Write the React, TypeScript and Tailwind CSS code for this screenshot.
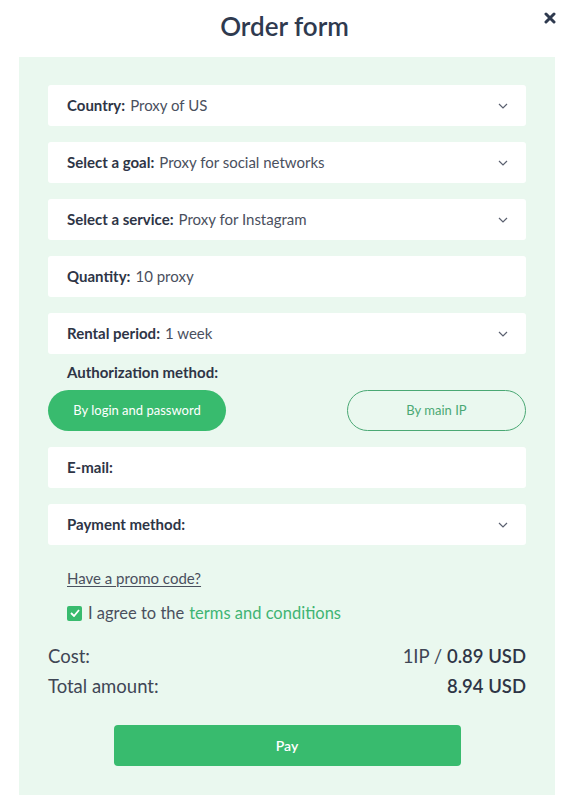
import * as React from "react"

const font = { fontFamily: "Lato, 'Open Sans', sans-serif" }

function Chevron() {
  return (
    <svg width="10" height="6" viewBox="0 0 10 6" className="ml-auto mr-[18px]">
      <path d="M1 1l4 4 4-4" fill="none" stroke="#5b6170" strokeWidth="1.2" />
    </svg>
  )
}

function Field({ label, value, select = true }: { label: string; value?: string; select?: boolean }) {
  return (
    <div className="flex h-[41px] items-center rounded-[3px] bg-white pl-[19px] text-[15px]">
      <span className="font-bold text-[#2e3546]">{label}</span>
      {value && <span className="ml-[5px] text-[#4a505e]">{value}</span>}
      {select && <Chevron />}
    </div>
  )
}

export default function App() {
  return (
    <div className="relative h-[800px] w-[569px] bg-white" style={font}>
      <div className="flex h-[57px] items-center justify-center">
        <h1 className="-mt-[4px] text-[26px] font-semibold text-[#2f3a4f]">Order form</h1>
      </div>
      <button className="absolute right-[13px] top-[12px] text-[#2f3a4f]">
        <svg width="12" height="12" viewBox="0 0 12 12">
          <path d="M2 2l8 8M10 2l-8 8" stroke="#2f3a4f" strokeWidth="3" strokeLinecap="round" />
        </svg>
      </button>

      <div className="ml-[19px] h-[738px] w-[536px] bg-[#eaf8ef] px-[29px] pt-[28px]">
        <div className="flex flex-col gap-[16px]">
          <Field label="Country:" value="Proxy of US" />
          <Field label="Select a goal:" value="Proxy for social networks" />
          <Field label="Select a service:" value="Proxy for Instagram" />
          <Field label="Quantity:" value="10 proxy" select={false} />
          <Field label="Rental period:" value="1 week" />
        </div>

        <div className="mt-[8px] pl-[19px] text-[15px] font-bold leading-[20px] text-[#2e3546]">
          Authorization method:
        </div>
        <div className="mt-[8px] flex justify-between">
          <button className="h-[41px] w-[178px] rounded-full bg-[#38bb6e] text-[13px] text-white">
            By login and password
          </button>
          <button className="h-[41px] w-[179px] rounded-full border border-[#4aa874] text-[13px] text-[#4aa874]">
            By main IP
          </button>
        </div>

        <div className="mt-[16px] flex flex-col gap-[16px]">
          <Field label="E-mail:" select={false} />
          <Field label="Payment method:" />
        </div>

        <div className="mt-[23px] pl-[19px] text-[15px] leading-[20px] text-[#4a505e] underline underline-offset-2">
          Have a promo code?
        </div>
        <div className="mt-[13px] flex items-center pl-[19px] text-[16.5px] leading-[24px] text-[#4a505e]">
          <span className="mr-[6px] flex h-[15px] w-[15px] items-center justify-center rounded-[2px] bg-[#38bb6e]">
            <svg width="10" height="8" viewBox="0 0 10 8">
              <path d="M1 4l3 3 5-6" fill="none" stroke="white" strokeWidth="1.8" />
            </svg>
          </span>
          I agree to the<span className="ml-[5px] text-[#3fb473]">terms and conditions</span>
        </div>

        <div className="mt-[18px] flex justify-between text-[18.5px] leading-[26px] text-[#3f4655]">
          <span>Cost:</span>
          <span>
            1IP / <span className="font-semibold text-[#2e3546]">0.89 USD</span>
          </span>
        </div>
        <div className="mt-[4px] flex justify-between text-[18.5px] leading-[26px] text-[#3f4655]">
          <span>Total amount:</span>
          <span className="font-semibold text-[#2e3546]">8.94 USD</span>
        </div>

        <div className="mt-[26px] flex justify-center">
          <button className="h-[41px] w-[347px] rounded-[4px] bg-[#38bb6e] text-[14px] font-semibold text-white">
            Pay
          </button>
        </div>
      </div>
    </div>
  )
}
